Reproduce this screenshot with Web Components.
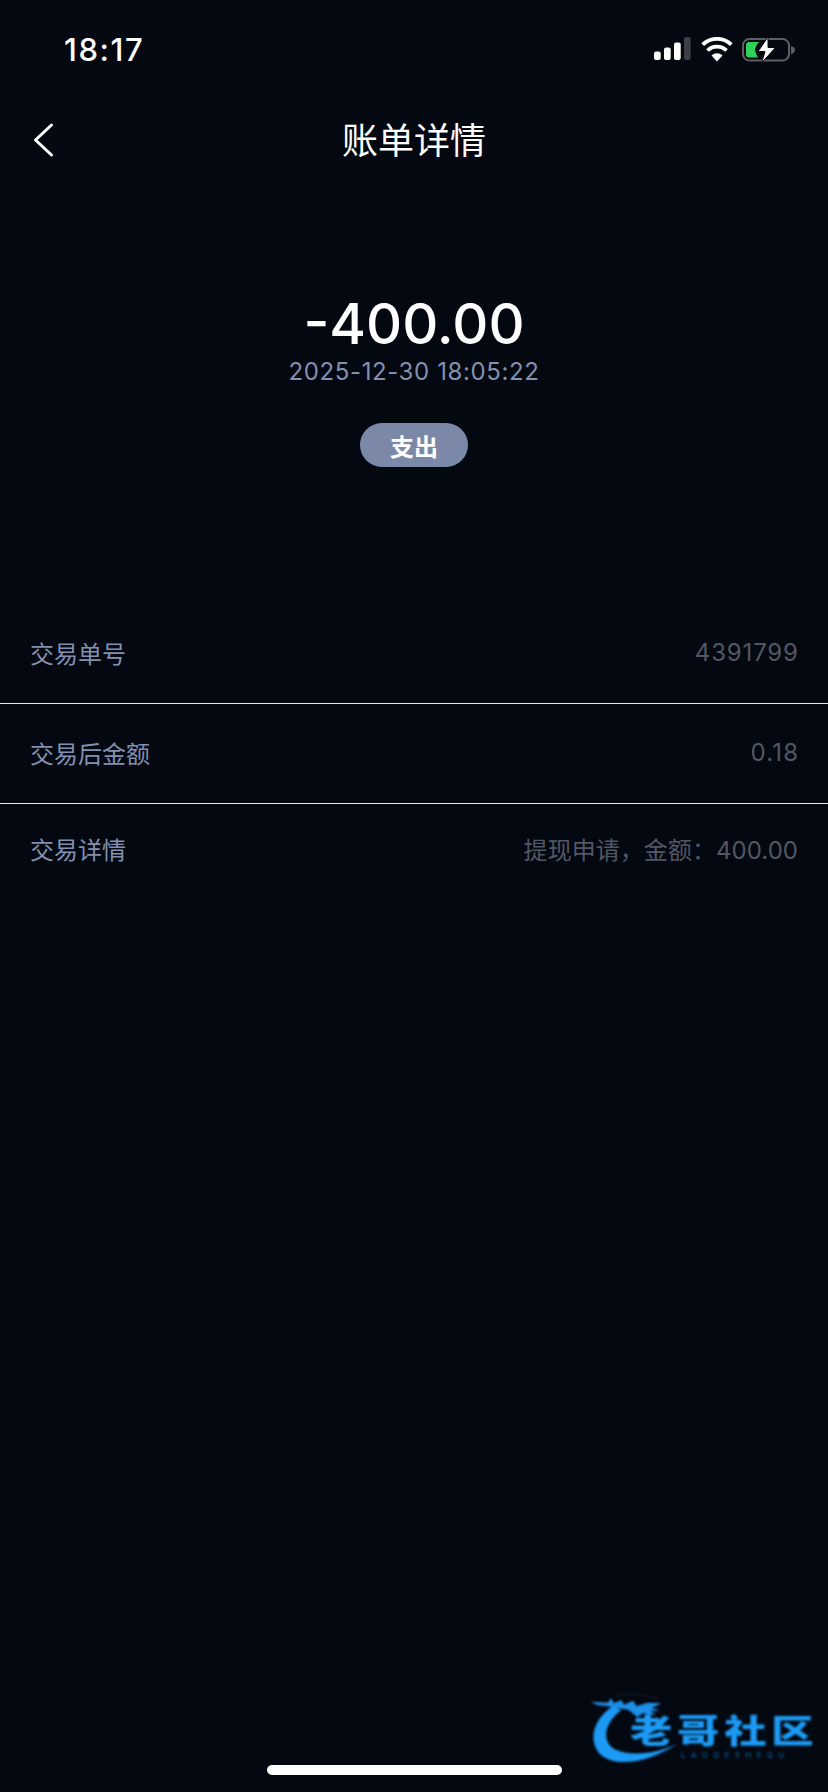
<!DOCTYPE html>
<html lang="zh">
<head>
<meta charset="utf-8">
<title>账单详情</title>
<style>
  html, body { margin: 0; padding: 0; background: #040810; }
  body { width: 828px; height: 1792px; overflow: hidden; position: relative; font-family: Inter, "Noto Sans CJK SC", sans-serif; }
  detail-list { margin-top: 134px; }
</style>
</head>
<body>
<status-bar time="18:17"></status-bar>
<nav-header>账单详情</nav-header>
<bill-summary amount="-400.00" date="2025-12-30 18:05:22" tag="支出"></bill-summary>
<detail-list>
  <detail-row label="交易单号" height="102" tracking="0.85">4391799</detail-row>
  <detail-row label="交易后金额" height="100" tracking="1.2" divider>0.18</detail-row>
  <detail-row label="交易详情" height="92" tracking="0.05" divider>提现申请，金额：400.00</detail-row>
</detail-list>
<site-logo></site-logo>
<home-indicator></home-indicator>

<script>
class StatusBar extends HTMLElement {
  constructor() {
    super();
    this.attachShadow({ mode: 'open' });
  }

  connectedCallback() {
    this.shadowRoot.innerHTML = `
      <style>
        :host { display: flex; height: 100px; padding: 0 32px 2px 64px; align-items: center; justify-content: space-between; box-sizing: border-box; color: #fff; }
        .time { font-size: 31px; font-weight: 500; letter-spacing: 1.6px; }
        .icons { display: flex; align-items: center; gap: 10px; }
        svg { display: block; }
      </style>
      <span class="time">${this.getAttribute('time')}</span>
      <div class="icons">
        <svg width="37" height="24" viewBox="0 0 37 24">
          <rect x="0" y="14.500" width="6.700" height="8.500" rx="2" fill="#fff"/>
          <rect x="10" y="10.500" width="6.700" height="12.500" rx="2" fill="#fff"/>
          <rect x="20" y="5.500" width="6.700" height="17.500" rx="2" fill="#fff"/>
          <rect x="30" y="0" width="6.700" height="23" rx="2" fill="#3c3f45"/>
        </svg>
        <svg width="32" height="25" viewBox="0 0 32 25">
          <path d="M16 24.500 l-5.500-6 a8 8 0 0 1 11 0 z" fill="#fff"/>
          <path d="M6.500 13.500 a13.500 13.500 0 0 1 19 0" fill="none" stroke="#fff" stroke-width="3.800"/>
          <path d="M1.700 7.600 a20.500 20.500 0 0 1 28.600 0" fill="none" stroke="#fff" stroke-width="3.800"/>
        </svg>
        <svg width="54" height="26" viewBox="0 0 54 26" style="margin:1px 0 0 -1px">
          <rect x="1" y="2" width="46" height="21.500" rx="6.500" fill="none" stroke="#5c5f64" stroke-width="2"/>
          <path d="M49 9 q4 1 4 4 t-4 4 z" fill="#5c5f64"/>
          <path d="M7 5 h10 q-3 3 -4 7 q0 3 3 8.500 h-9 q-3 0 -3 -3 v-9.500 q0 -3 3 -3 z" fill="#30d158"/>
          <path d="M26 0 L16 14.500 h7 L19.500 26 L33.500 10.500 h-7.500 z" fill="#fff" stroke="#040810" stroke-width="1"/>
        </svg>
      </div>
    `;
  }
}

class NavHeader extends HTMLElement {
  constructor() {
    super();
    this.attachShadow({ mode: 'open' });
    this.shadowRoot.innerHTML = `
      <style>
        :host { display: flex; height: 80px; box-sizing: border-box; padding-bottom: 4px; align-items: center; justify-content: center; position: relative; color: #fff; font-size: 36px; font-family: "Noto Sans CJK SC", sans-serif; font-weight: 400; }
        svg { position: absolute; left: 32px; top: 22px; }
      </style>
      <svg width="24" height="36" viewBox="0 0 24 36"><path d="M19.500 3 L3.500 18 L19.500 33" fill="none" stroke="#fff" stroke-width="3" stroke-linecap="round" stroke-linejoin="round"/></svg>
      <slot></slot>
    `;
  }
}

class BillSummary extends HTMLElement {
  constructor() {
    super();
    this.attachShadow({ mode: 'open' });
  }

  connectedCallback() {
    this.shadowRoot.innerHTML = `
      <style>
        :host { display: flex; flex-direction: column; align-items: center; padding-top: 111px; color: #fff; }
        .amount { font-size: 56px; line-height: 66px; font-weight: 450; }
        .date { font-size: 24px; line-height: 30px; color: #8390b0; letter-spacing: 0.6px; }
        .tag { margin-top: 36px; width: 108px; height: 44px; border-radius: 22px; background: #7b88a8; display: flex; align-items: center; justify-content: center; font: 700 24px "Noto Sans CJK SC", sans-serif; }
      </style>
      <div class="amount">${this.getAttribute('amount')}</div>
      <div class="date">${this.getAttribute('date')}</div>
      <div class="tag">${this.getAttribute('tag')}</div>
    `;
  }
}

class DetailList extends HTMLElement {
  constructor() {
    super();
    this.attachShadow({ mode: 'open' });
    this.shadowRoot.innerHTML = `
      <style>:host { display: flex; flex-direction: column; }</style>
      <slot></slot>
    `;
  }
}

class DetailRow extends HTMLElement {
  constructor() {
    super();
    this.attachShadow({ mode: 'open' });
  }

  connectedCallback() {
    const h = this.getAttribute('height');
    const tracking = this.getAttribute('tracking') || 0;
    this.shadowRoot.innerHTML = `
      <style>
        :host { display: flex; height: ${h}px; padding: 0 30px; box-sizing: border-box; align-items: center; justify-content: space-between; font: 24px Inter, "Noto Sans CJK SC", sans-serif; }
        :host([divider]) { border-top: 1px solid #e6e6e6; padding-bottom: 2px; }
        .label { color: #8390b0; font-family: "Noto Sans CJK SC", sans-serif; }
        .value { color: #525766; letter-spacing: ${tracking}px; margin-right: -${tracking}px; }
      </style>
      <span class="label">${this.getAttribute('label')}</span>
      <span class="value"><slot></slot></span>
    `;
  }
}

class SiteLogo extends HTMLElement {
  constructor() {
    super();
    this.attachShadow({ mode: 'open' });
    this.shadowRoot.innerHTML = `
      <style>
        :host { display: block; position: absolute; left: 578px; top: 1680px; width: 250px; height: 112px; filter: blur(0.8px); }
        svg { position: absolute; left: 0; top: 0; }
        .name { position: absolute; left: 52px; top: 36px; font: 900 33px/32px "Liberation Sans", "Noto Sans CJK SC", sans-serif; color: #1c9af5; white-space: nowrap; letter-spacing: 3.800px; transform: scaleX(1.28); transform-origin: left center; }
        .sub { position: absolute; left: 103px; top: 71px; font: 500 8px/9px Inter, sans-serif; color: #0f5a96; letter-spacing: 5.400px; white-space: nowrap; }
      </style>
      <svg width="250" height="112" viewBox="0 0 750 336">
        <path d="M115 45 C160 38 210 45 240 58" fill="none" stroke="#10263c" stroke-width="3"/>
        <polygon points="38,65 88,68 100,55 108,70 130,60 138,74 165,62 176,78 210,68 250,70 222,84 245,92 218,94 235,106 195,100 178,112 152,90 120,84 85,78 60,76" fill="#1c8fe6"/>
        <path d="M105 78 C55 110 28 170 60 215 C95 262 200 258 300 190 C240 222 150 232 105 205 C72 180 78 130 130 90 Z" fill="#1c9af5"/>
      </svg>
      <div class="name">老哥社区</div>
      <div class="sub">LAOGESHEQU</div>
    `;
  }
}

class HomeIndicator extends HTMLElement {
  constructor() {
    super();
    this.attachShadow({ mode: 'open' });
    this.shadowRoot.innerHTML = `
      <style>
        :host { display: block; position: absolute; left: 267px; top: 1765px; width: 295px; height: 10px; border-radius: 5px; background: #fff; }
      </style>
    `;
  }
}

customElements.define('status-bar', StatusBar);
customElements.define('nav-header', NavHeader);
customElements.define('bill-summary', BillSummary);
customElements.define('detail-list', DetailList);
customElements.define('detail-row', DetailRow);
customElements.define('site-logo', SiteLogo);
customElements.define('home-indicator', HomeIndicator);
</script>
</body>
</html>
